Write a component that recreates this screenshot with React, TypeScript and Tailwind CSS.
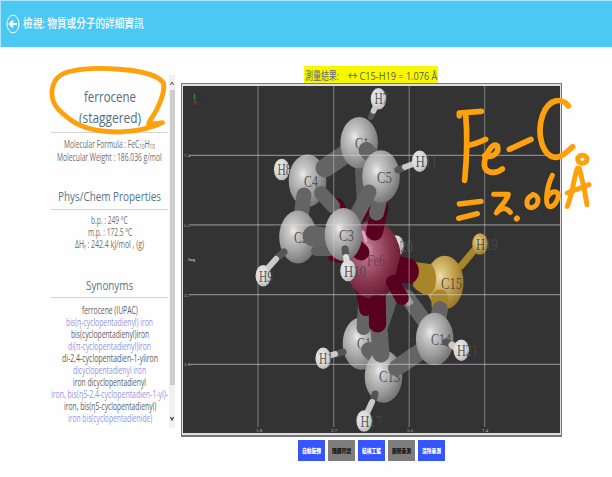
import React, { useLayoutEffect, useRef, useState } from "react";

/* Text condensed horizontally so that it fills exactly the given width. */
function Fit({ w, children, className = "" }: { w: number; children: React.ReactNode; className?: string }) {
  const ref = useRef<HTMLSpanElement>(null);
  const [scale, setScale] = useState(1);
  useLayoutEffect(() => {
    if (ref.current) setScale(w / ref.current.offsetWidth);
  }, [w]);
  return (
    <span className={"flex shrink-0 justify-start " + className} style={{ width: w }}>
      <span ref={ref} className="block shrink-0 origin-left whitespace-nowrap" style={{ transform: `scaleX(${scale})` }}>
        {children}
      </span>
    </span>
  );
}

const synonyms: [string, number][] = [
  ["ferrocene (IUPAC)", 56],
  ["bis(η-cyclopentadienyl) iron", 87],
  ["bis(cyclopentadienyl)iron", 78],
  ["di(π-cyclopentadienyl)iron", 83],
  ["di-2,4-cyclopentadien-1-yliron", 96],
  ["dicyclopentadienyl iron", 73],
  ["iron dicyclopentadienyl", 73],
  ["iron, bis(η5-2,4-cyclopentadien-1-yl)-", 117],
  ["iron, bis(η5-cyclopentadienyl)", 92],
  ["iron bis(cyclopentadienide)", 84],
];

const buttons = ["自動旋轉", "隱藏符號", "結構工藍", "關閉量測", "清除量測"];

function Bond({ d, w = 15, c = "#646464" }: { d: string; w?: number; c?: string }) {
  return <path d={d} stroke={c} strokeWidth={w} strokeLinecap="round" fill="none" />;
}

function Atom({ x, y, rx = 18.8, ry = 26.3, fill = "url(#carbon)" }: { x: number; y: number; rx?: number; ry?: number; fill?: string }) {
  return <ellipse cx={x} cy={y} rx={rx} ry={ry} fill={fill} />;
}

function Hydrogen({ x, y }: { x: number; y: number }) {
  return <ellipse cx={x} cy={y} rx={7.8} ry={10.8} fill="url(#hydrogen)" />;
}

function Label({ x, y, t, w, c = "#484848" }: { x: number; y: number; t: string; w: number; c?: string }) {
  return (
    <text x={x} y={y} fontSize="16.5" fill={c} fillOpacity="0.9" textLength={w} lengthAdjust="spacingAndGlyphs" className="font-['Liberation_Serif',serif]">
      {t}
    </text>
  );
}

function Ball({ id, stops }: { id: string; stops: string[] }) {
  return (
    <radialGradient id={id} cx="0.38" cy="0.38" r="0.68">
      <stop offset="0" stopColor={stops[0]} />
      <stop offset="0.2" stopColor={stops[1]} />
      <stop offset="0.6" stopColor={stops[2]} />
      <stop offset="1" stopColor={stops[3]} />
    </radialGradient>
  );
}

function Molecule() {
  const iron = "#59001f";
  const gold = "#a88529";
  const pale = "#cacaca";
  const dark = "#555555";
  return (
    <svg viewBox="183 86 377 347" className="block h-[347px] w-[377px]">
      <defs>
        <Ball id="carbon" stops={["#ececec", "#c9c9c9", "#a0a0a0", "#707070"]} />
        <Ball id="hydrogen" stops={["#ececec", "#e4e4e4", "#d6d6d6", "#b4b4b4"]} />
        <Ball id="iron" stops={["#e0a9ba", "#ae6880", "#8b3651", "#63152f"]} />
        <Ball id="gold" stops={["#f0dfaa", "#dcc27c", "#bd9b46", "#957524"]} />
      </defs>

      {/* upper ring, rear part */}
      <Hydrogen x={281.7} y={169.5} />
      <Label x={277.5} y={175} t="H8" w={14} />
      <Hydrogen x={396} y={246} />
      <Bond d="M361 170L363 207" w={12} c="#5c5c5c" />
      <Atom x={307.5} y={180.7} />
      <Label x={304} y={186.5} t="C4" w={14} />
      <Bond d="M325 168L350 151" w={19} />
      <Atom x={359.2} y={142.8} ry={25.8} />
      <Label x={355} y={148.5} t="C1" w={14} />
      <Bond d="M371 117L373 112" w={6} c={dark} />
      <Bond d="M373.5 111L378 101" w={5.5} c={pale} />
      <Hydrogen x={378.5} y={98.8} />
      <Label x={374.5} y={104} t="H7" w={14} />
      <Bond d="M366.5 150L378 163" w={16} />

      {/* lower ring, rear part */}
      <Bond d="M394 291L383 325" w={12} c="#606060" />
      <Atom x={361.5} y={343.5} />
      <Label x={357} y={348.5} t="C1" w={14} />
      <Bond d="M343 352L337 354" w={7} c={dark} />
      <Bond d="M335 354L327 356.5" w={6} c={pale} />
      <Hydrogen x={323.2} y={358.3} />
      <Label x={319} y={364} t="H1" w={14} />
      <Bond d="M365 305L363.5 328" w={14} />
      <Bond d="M363 290L366 309" w={14} c={iron} />
      <Bond d="M369 350L381 361" w={16} />
      <Bond d="M407 297L431 330" w={15} />

      {/* iron centre */}
      <Bond d="M337 205L350 232" w={14} c={iron} />
      <Bond d="M332 258L347 260" w={7} c={iron} />
      <Bond d="M377 285L377.5 325" w={17} c={iron} />
      <Bond d="M385 263L407 271" w={24} c={iron} />
      <Atom x={373} y={260} rx={28} ry={39} fill="url(#iron)" />
      <Label x={367} y={265.5} t="Fe6" w={18} c="#6d3a49" />
      <path d="M400 238C404 242 404 250 400 252Z" fill="#bbb" />
      <Label x={400} y={252} t="20" w={13} c="#505050" />
      <path d="M400 281L414 303L407 307Z" fill="#9b9b9b" />
      <Bond d="M393 282L402 298" w={14} c={iron} />
      <Bond d="M380 207L374.5 232" w={17} c={iron} />
      <Bond d="M372 202L362 217" w={9} c={iron} />
      <Bond d="M321 193L333 206" w={14} />
      <Bond d="M304 195L301 217" w={15} />
      <Bond d="M381 193L376.5 213" w={15} />

      {/* upper ring, front part */}
      <Atom x={298} y={237} ry={26.5} />
      <Label x={294} y={242.5} t="C2" w={14} />
      <Bond d="M313 236L330 239" w={21} />
      <Bond d="M316 251L330 251" w={10} c="#606060" />
      <Bond d="M284 252L278 257" w={7} c={dark} />
      <Bond d="M276 259L268 268" w={6} c={pale} />
      <Hydrogen x={263.3} y={275.7} />
      <Label x={259} y={281.5} t="H9" w={14} />
      <Bond d="M352 244L361 252" w={17} c={iron} />
      <Bond d="M363 232L366 241" w={3} c="#dca8b8" />
      <Atom x={381} y={176.5} />
      <Label x={377} y={182.5} t="C5" w={15} />
      <Bond d="M398 170L403 168" w={7} c={dark} />
      <Bond d="M405 167L416 163" w={6} c={pale} />
      <Hydrogen x={419.7} y={161.2} />
      <Label x={415.5} y={167} t="H11" w={22} />
      <Bond d="M369 192L353 222" w={15} />
      <Atom x={343.5} y={234.5} ry={26.5} />
      <Label x={339} y={240.5} t="C3" w={15} />
      <Bond d="M345 249L345.5 253" w={7} c={dark} />
      <Bond d="M346 257L347.5 266" w={6} c="#dedede" />
      <Hydrogen x={348} y={270.5} />
      <Label x={344} y={276.5} t="H10" w={22} />

      {/* highlighted carbon and hydrogen */}
      <Bond d="M461 266L476 248" w={7} c={gold} />
      <ellipse cx="480" cy="244" rx="7.8" ry="10.8" fill="url(#gold)" />
      <Label x={476} y={249.5} t="H19" w={22} />
      <Atom x={444.7} y={282.5} ry={26.7} fill="url(#gold)" />
      <path d="M415 262L430 264C438 268 438 290 430 294C424 296 418 292 413 286Z" fill={gold} />
      <path d="M400 257L412 259C421 264 422 280 410 284L394 281Z" fill={iron} />
      <Label x={441} y={288.5} t="C15" w={21} />
      <Bond d="M440 298L440 306" w={17} c={gold} />
      <Bond d="M440 309L437 325" w={16} />

      {/* lower ring, front part */}
      <Bond d="M396 368L423 350" w={17} />
      <Atom x={434.7} y={339} />
      <Label x={431} y={344.5} t="C14" w={20} />
      <Bond d="M446 342L450 344" w={7} c={dark} />
      <Bond d="M452 345L458 349" w={7} c={pale} />
      <Hydrogen x={461.3} y={350.2} />
      <Label x={457} y={356} t="H21" w={21} />
      <Atom x={383.5} y={376.5} />
      <Bond d="M379 329L381 354" w={17} />
      <Bond d="M377 303L377.7 324" w={17} c={iron} />
      <Label x={379} y={382} t="C13" w={21} />
      <Bond d="M396 368L407 361" w={16} />
      <Bond d="M375 394L374 398" w={7} c={dark} />
      <Bond d="M372 402L367 413" w={6} c={pale} />
      <Hydrogen x={364.2} y={421} />
      <Label x={360.5} y={427} t="H17" w={21} />

      {/* grid and scale marks */}
      <g stroke="#dcdcdc" strokeWidth="1.3">
        <path d="M258 86V427M333.7 86V427M409.2 86V427M484.6 86V427" strokeOpacity="0.36" />
        <path d="M190 155.4H560M190 224.8H560M190 294.7H560M190 364.4H560" strokeOpacity="0.5" />
      </g>
      <g fill="#bcbcbc" fontSize="5" className="font-['Liberation_Serif',serif]">
        <text x="184" y="157.2">7.4</text>
        <text x="184" y="226.6">5.5</text>
        <text x="184" y="296.5">3.7</text>
        <text x="184" y="366.2">1.8</text>
        <text x="187.5" y="260.5" fontWeight="bold" textLength="7.5" lengthAdjust="spacingAndGlyphs">Ang</text>
        <text x="256" y="432">1.8</text>
        <text x="331" y="432">3.7</text>
        <text x="407" y="432">5.5</text>
        <text x="482" y="432">7.4</text>
      </g>
      <path d="M195 98V101M193.5 105L195 101L197 104" stroke="#8d3529" strokeWidth="1" fill="none" />
      <path d="M194.5 94V99" stroke="#278b3b" strokeWidth="1.6" />
      <path d="M198 99L206 101" stroke="#292b4c" strokeWidth="1" />
    </svg>
  );
}

/* Freehand marker strokes lying over the page. */
function Ink() {
  return (
    <svg viewBox="0 0 612 477" className="pointer-events-none absolute inset-0 h-[477px] w-[612px]" fill="none" stroke="#ffa00d" strokeLinecap="round" strokeLinejoin="round">
      <path strokeWidth="4.8" d="M162 122.7C152 128 138 131 120 132C102 132 83 129 71 120C58 111 51 103 52 91C53 79 60 73 72 71C88 67 105 68 122 69.5C140 71 158 75 163.5 83C165 90 161 101 156.5 110C153 117 149 121 148.5 124.5L162.5 122.7" />
      <g transform="translate(370 60) scale(.33333)" strokeWidth="17">
        <path d="M268 167L268 159L334 154" />
        <path d="M287 162C292 220 291 290 284 361" />
        <path d="M290 257C308 255 325 249 347 238" />
        <path d="M344 287C365 295 390 279 382 258C369 244 343 285 343 315C345 338 373 345 397 327" />
        <path d="M418 268L483 238" />
        <path d="M595 138C577 113 538 113 518 165C498 225 518 291 560 292C579 290 594 273 608 260" />
        <g strokeWidth="15">
          <path d="M622 325C612 350 609 397 592 439M628 325C637 358 646 399 651 434M592 399L657 374" />
          <ellipse cx="637" cy="298" rx="14" ry="12" />
          <path d="M268 432L333 424M266 475L322 461" strokeWidth="16" />
          <path d="M371 403H415C410 425 387 441 379 459C393 442 408 441 421 457" />
          <path d="M440 476L441 475" strokeWidth="17" />
          <path d="M486 406C465 415 467 445 484 443C506 440 513 409 489 403" />
          <path d="M547 346C530 380 524 431 536 439C552 446 570 413 563 399C551 389 535 402 531 414" />
        </g>
      </g>
    </svg>
  );
}

export default function App() {
  return (
    <div className="relative flex h-[477px] w-[612px] flex-col overflow-hidden bg-[#fefefe] font-['Open_Sans','Noto_Sans_CJK_TC',sans-serif]">
      <header className="flex h-[47px] shrink-0 items-center border-t border-l border-[#a9e5fa] bg-[#4bc9f3] pb-px pl-[5px] text-white">
        <svg viewBox="0 0 14 20" className="h-5 w-3.5" fill="none" stroke="white">
          <ellipse cx="7" cy="10" rx="6" ry="8.8" strokeWidth="1" />
          <path d="M11 10H4M7 6.8L3.7 10L7 13.2" strokeWidth="1.9" />
        </svg>
        <Fit w={121} className="ml-[3px] text-[12.5px] leading-5 font-medium">檢視: 物質或分子的詳細資訊</Fit>
      </header>

      <main className="flex h-[430px] shrink-0 pl-[51px]">
        <aside className="flex w-[117px] shrink-0 flex-col items-center pt-[39px] text-[10px] leading-3 text-[#6e6e6e]">
          <h1 className="flex h-[47px] w-full flex-col items-center border-b border-[#d5d5d5] text-[15px] leading-[21px] font-normal text-[#526d80]">
            <Fit w={52}>ferrocene</Fit>
            <Fit w={62}>(staggered)</Fit>
          </h1>
          <div className="mt-[5px] flex flex-col items-center leading-[13px]">
            <Fit w={91}>Molecular Formula : FeC<span className="align-[-1px] text-[7px] leading-none">10</span>H<span className="align-[-1px] text-[7px] leading-none">10</span></Fit>
            <Fit w={105}>Molecular Weight : 186.036 g/mol</Fit>
          </div>
          <h2 className="mt-[23px] flex h-[23px] w-full justify-center border-b border-[#d5d5d5] text-[13px] leading-[18px] font-normal text-[#59758a]">
            <Fit w={103}>Phys/Chem Properties</Fit>
          </h2>
          <div className="mt-1 flex flex-col items-center">
            <Fit w={37}>b.p. : 249 °C</Fit>
            <Fit w={44}>m.p. : 172.5 °C</Fit>
            <Fit w={69}>ΔH<span className="align-[-2px] text-[7px] leading-none">f</span> : 242.4 kJ/mol , (g)</Fit>
          </div>
          <h2 className="mt-[25px] flex h-[22px] w-full justify-center border-b border-[#d5d5d5] text-[13px] leading-[18px] font-normal text-[#59758a]">
            <Fit w={47}>Synonyms</Fit>
          </h2>
          <ul className="mt-1.5 flex flex-col items-center">
            {synonyms.map(([name, w], i) => (
              <li key={name} className={i % 2 ? "text-[#9595e8]" : "text-[#5c5c5c]"}>
                <Fit w={w}>{name}</Fit>
              </li>
            ))}
          </ul>
        </aside>

        <div className="mt-7 ml-px flex h-[353px] w-1.5 shrink-0 flex-col items-center justify-between bg-[#f1f1f1]">
          <svg viewBox="0 0 6 15" className="h-[15px] w-1.5" fill="none" stroke="#555"><path d="M1.4 10L3 7L4.6 10" /></svg>
          <div className="h-[295px] w-[5px] bg-[#cdcdcd]" />
          <svg viewBox="0 0 6 43" className="h-[43px] w-1.5" fill="none" stroke="#444"><path d="M1.4 32L3 35L4.6 32" strokeWidth="1.2" /></svg>
        </div>

        <section className="ml-1.5 flex w-[381px] shrink-0 flex-col items-center pt-[19px]">
          <div className="mr-px flex h-[17px] w-[134px] items-center justify-between bg-[#f7f700] px-px pt-[3px] text-[11px] leading-[14px] text-[#5d5d50]">
            <Fit w={34} className="text-[#67677c]">測量結果:</Fit>
            <Fit w={89}>↔ C15-H19 = 1.076 Å</Fit>
          </div>
          <div className="h-[354px] w-[381px] border border-b-2 border-[#777] bg-[#333]">
            <div className="h-[351px] w-[379px] border-x border-y-2 border-[#dedede]">
              <Molecule />
            </div>
          </div>
          <div className="mt-[3px] flex gap-[3px]">
            {buttons.map((text, i) => (
              <button key={text} className={"flex h-[21px] w-[27px] items-center justify-center text-[6px] leading-none font-black " + (i % 2 ? "bg-[#7d7d7d] text-[#151515]" : "bg-[#3655ff] text-white")}>
                <Fit w={19}>{text}</Fit>
              </button>
            ))}
          </div>
        </section>
      </main>
      <Ink />
    </div>
  );
}
